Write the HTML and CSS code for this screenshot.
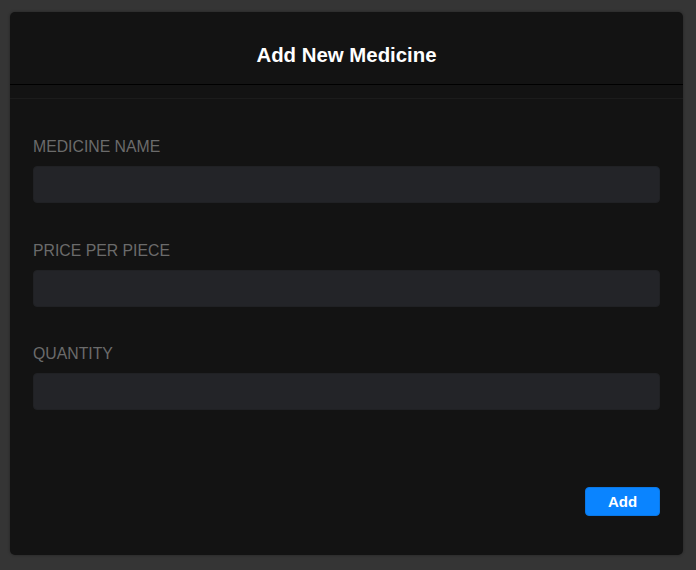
FILE: index.html
```html
<!DOCTYPE html>
<html>
<head>
<meta charset="utf-8">
<link rel="stylesheet" href="styles.css">
</head>
<body>
<div class="modal">
  <div class="modal-header">Add New Medicine</div>
  <div class="modal-gap"></div>
  <form class="modal-body">
    <div class="field">
      <label class="label">MEDICINE NAME</label>
      <input class="input" type="text">
    </div>
    <div class="field">
      <label class="label">PRICE PER PIECE</label>
      <input class="input" type="text">
    </div>
    <div class="field">
      <label class="label">QUANTITY</label>
      <input class="input" type="text">
    </div>
    <div class="actions">
      <button class="btn" type="button">Add</button>
    </div>
  </form>
</div>
</body>
</html>
```

FILE: styles.css
```css
html, body {
  margin: 0;
  padding: 0;
  background: #353535;
  font-family: "Liberation Sans", Arial, sans-serif;
}
body {
  width: 696px;
  height: 570px;
  overflow: hidden;
}
.modal {
  margin: 12px 0 0 10px;
  width: 673px;
  height: 543px;
  background: #131313;
  border-radius: 5px;
  display: flex;
  flex-direction: column;
  box-shadow: 0 0 3px rgba(0,0,0,0.35);
}
.modal-header {
  padding: 31px 0 17px;
  text-align: center;
  color: #ffffff;
  font-weight: bold;
  font-size: 20.4px;
  line-height: 24px;
  border-bottom: 1px solid #000;
}
.modal-gap {
  height: 13px;
  border-bottom: 1px solid #1c1c1c;
}
.modal-body {
  flex: 1;
  margin: 0;
  padding: 39px 23px 39px;
  display: flex;
  flex-direction: column;
}
.field {
  display: flex;
  flex-direction: column;
  margin-bottom: 38.5px;
}
.label {
  color: #6b6b6b;
  font-size: 15.8px;
  line-height: 18px;
  margin-bottom: 10px;
}
.input {
  height: 37px;
  box-sizing: border-box;
  border: 1px solid #202124;
  border-radius: 4px;
  background: #232428;
  outline: none;
  color: #ddd;
  font-family: inherit;
  font-size: 15px;
  padding: 0 10px;
}
.actions {
  margin-top: auto;
  display: flex;
  justify-content: flex-end;
}
.btn {
  width: 75px;
  height: 29px;
  border: 1px solid #0a78e6;
  border-radius: 4px;
  background: #0a84ff;
  color: #fff;
  font-family: inherit;
  font-weight: bold;
  font-size: 15px;
  padding: 0;
}
```
